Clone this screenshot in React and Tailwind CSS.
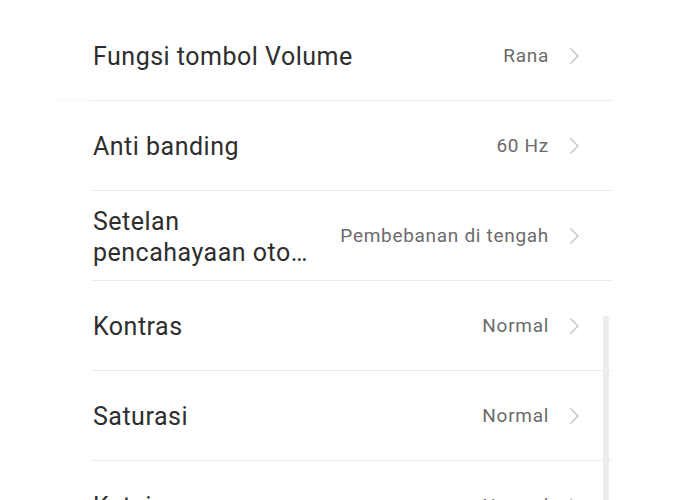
import React from "react";

const rows = [
  { title: ["Fungsi tombol Volume"], value: "Rana" },
  { title: ["Anti banding"], value: "60 Hz" },
  { title: ["Setelan", "pencahayaan otomatis"], value: "Pembebanan di tengah" },
  { title: ["Kontras"], value: "Normal" },
  { title: ["Saturasi"], value: "Normal" },
  { title: ["Ketajaman"], value: "Normal" },
];

function Chevron() {
  return (
    <svg width="11" height="18" viewBox="0 0 11 18" fill="none" className="ml-[20px] mr-[32px] shrink-0">
      <path d="M1.5 1.5 L9 9 L1.5 16.5" stroke="#c4c4c4" strokeWidth="1.4" />
    </svg>
  );
}

export default function App() {
  return (
    <div
      className="relative h-[500px] w-[682px] overflow-hidden bg-white pt-[11px]"
      style={{ fontFamily: "Roboto, 'Noto Sans', sans-serif" }}
    >
      <div className="ml-[92px] w-[520px]">
        {rows.map((r, i) => (
          <div
            key={i}
            className="flex h-[90px] items-center border-b border-[#ebebeb]"
          >
            <div className="min-w-0 flex-1 pr-[24px] pl-px pt-[2px] text-[25px] leading-[31px] tracking-[0.5px] text-[#2e2e2e]">
              {r.title.map((line, j) => (
                <div key={j} className="truncate">
                  {line}
                </div>
              ))}
            </div>
            <div className="shrink-0 pt-px text-[19px] tracking-[0.7px] text-[#6b6b6b]">{r.value}</div>
            <Chevron />
          </div>
        ))}
      </div>
      <div className="absolute left-[52px] top-[100px] h-px w-[40px] bg-[#f6f6f6]" />
      <div className="absolute left-[603px] top-[316px] h-[200px] w-[6px] rounded-full bg-[#ececec]" />
    </div>
  );
}
